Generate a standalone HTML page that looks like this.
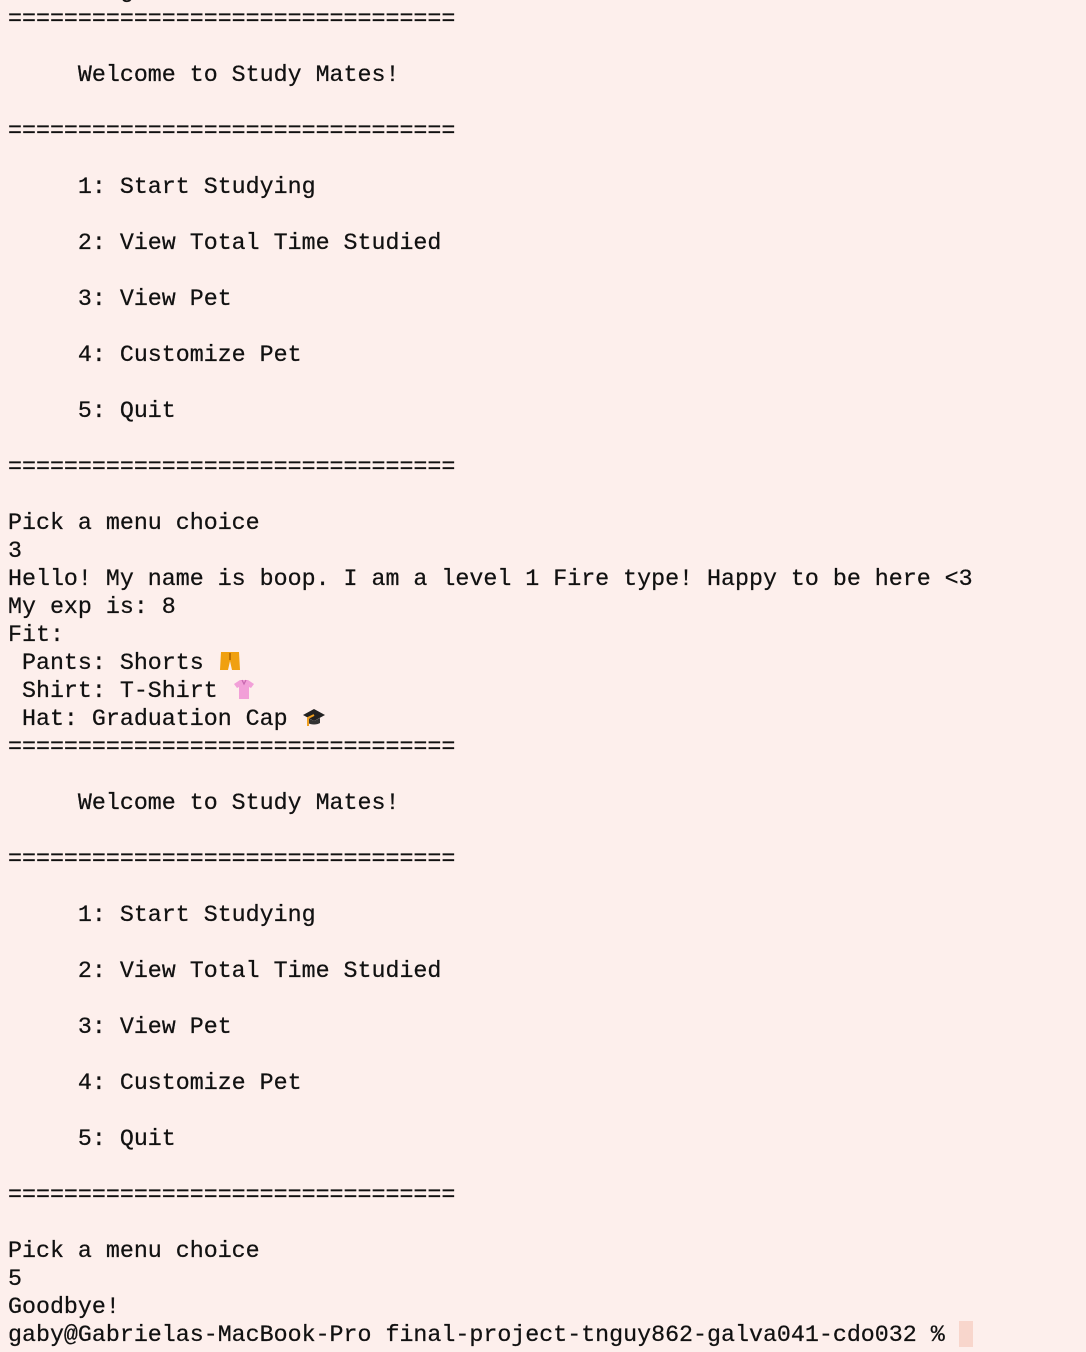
<!DOCTYPE html>
<html><head><meta charset="utf-8"><style>
html,body{margin:0;padding:0;background:#fdefec;width:1086px;height:1352px;overflow:hidden}
pre{position:absolute;left:8px;top:-23px;margin:0;font-family:"Liberation Mono",monospace;font-size:23.3px;line-height:28px;color:#111;white-space:pre;-webkit-text-stroke:0.25px #111}
.e{display:inline-block;width:24px;height:22px;vertical-align:-3px}
.cur{display:inline-block;width:14px;height:26px;background:#f8d6cc;vertical-align:-6px}
</style></head><body>
<pre>        g
================================

     Welcome to Study Mates!

================================

     1: Start Studying

     2: View Total Time Studied

     3: View Pet

     4: Customize Pet

     5: Quit

================================

Pick a menu choice
3
Hello! My name is boop. I am a level 1 Fire type! Happy to be here &lt;3
My exp is: 8
Fit:
 Pants: Shorts <svg class="e" viewBox="0 0 24 22"><path d="M3 2h18l1 18h-8l-2-9-2 9H2z" fill="#f0a010"/><path d="M12 3v7" stroke="#a86000" stroke-width="1.5"/></svg>
 Shirt: T-Shirt <svg class="e" viewBox="0 0 24 22"><path d="M8 2h8l6 4-3 4-2-1v12H7V9l-2 1-3-4z" fill="#f2a0d8"/><path d="M10 2l2 4 2-4" stroke="#c868b0" fill="none" stroke-width="1.2"/></svg>
 Hat: Graduation Cap <svg class="e" viewBox="0 0 24 22"><path d="M1 9l11-6 11 6-11 6z" fill="#222"/><path d="M6 12v5c3 2 9 2 12 0v-5l-6 3z" fill="#333"/><path d="M12 9l-6 3v8" stroke="#f0a020" stroke-width="2" fill="none"/></svg>
================================

     Welcome to Study Mates!

================================

     1: Start Studying

     2: View Total Time Studied

     3: View Pet

     4: Customize Pet

     5: Quit

================================

Pick a menu choice
5
Goodbye!
gaby@Gabrielas-MacBook-Pro final-project-tnguy862-galva041-cdo032 % <span class="cur"></span></pre>
</body></html>
